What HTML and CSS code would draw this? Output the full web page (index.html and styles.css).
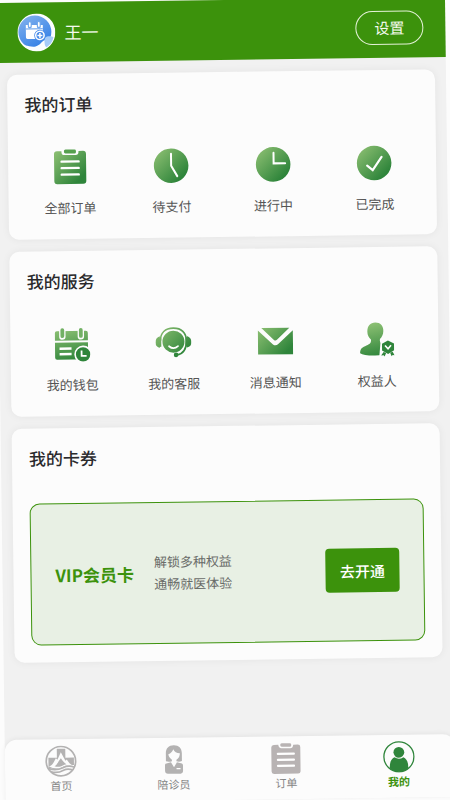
FILE: index.html
```html
<!DOCTYPE html>
<html lang="zh-CN">
<head>
<meta charset="utf-8">
<meta name="viewport" content="width=device-width, initial-scale=1">
<title>我的</title>
<link rel="stylesheet" href="styles.css">
</head>
<body>
<svg class="defs" width="0" height="0" aria-hidden="true">
  <defs>
    <linearGradient id="leaf" x1="0" y1="0" x2="36" y2="36" gradientUnits="userSpaceOnUse">
      <stop offset="0.1" stop-color="#89bd70"/>
      <stop offset="0.8" stop-color="#2f853b"/>
    </linearGradient>
    <linearGradient id="leafDown" x1="14" y1="0" x2="22" y2="36" gradientUnits="userSpaceOnUse">
      <stop offset="0" stop-color="#8fc275"/>
      <stop offset="0.95" stop-color="#2f853b"/>
    </linearGradient>
    <linearGradient id="sky" x1="0" y1="0" x2="0.6" y2="1">
      <stop offset="0" stop-color="#86b4ee"/>
      <stop offset="1" stop-color="#3480e6"/>
    </linearGradient>
  </defs>
</svg>
<div class="screen">
  <header class="header">
    <svg class="avatar" viewBox="0 0 38 38" role="img" aria-label="头像">
      <circle cx="19" cy="19" r="19" fill="#fbfdff"/>
      <circle cx="17.500" cy="18.500" r="16.500" fill="url(#sky)"/>
      <path d="M6 32c4-1 7 2 12 1s6-5 9-6 7-1 8-1c-2 6-8 11-16 11-6 0-10-2-13-5z" fill="#fbfdff"/>
      <path d="M27 27c0-3 2-4 4-4s4 0 5 1c-1 5-4 8-7 10-2-1-2-4-2-7z" fill="#a5cbf8"/>
      <path d="M8.500 11.500h17v14h-15.500q-1.500 0-1.500-1.500z" fill="#fff"/>
      <path d="M8.500 15.300h17" stroke="#5c9aeb" stroke-width="1"/>
      <path d="M12.500 9v4M21.500 9v4" stroke="#70a7ec" stroke-width="4" stroke-linecap="round"/>
      <path d="M12.500 9.500v3M21.500 9.500v3" stroke="#fff" stroke-width="1.700" stroke-linecap="round"/>
      <circle cx="22.500" cy="22" r="5.700" fill="#4489e8"/>
      <circle cx="22.500" cy="22" r="4.200" fill="none" stroke="#fff" stroke-width="1.500"/>
      <path d="M22.500 19.500v5M20 22h5" stroke="#fff" stroke-width="1.500"/>
    </svg>
    <span class="username">王一</span>
    <button class="settings" type="button">设置</button>
  </header>

  <main class="content">
    <section class="card">
      <h2 class="card-title">我的订单</h2>
      <nav class="grid">
        <a class="entry" href="#all">
          <svg class="entry-icon" viewBox="0 0 36 36">
            <path d="M5 2h4.500v1q0 3 3 3h11q3 0 3-3V2H31q3 0 3 3v27q0 3-3 3H5q-3 0-3-3V5q0-3 3-3z" fill="url(#leaf)"/>
            <rect x="12" y="0.500" width="12" height="4" rx="1.500" fill="#56a04e"/>
            <path d="M9.500 12.500h17M9.500 19h17M9.500 25.500h17" stroke="#fff" stroke-width="2.400" stroke-linecap="round"/>
          </svg>
          <span>全部订单</span>
        </a>
        <a class="entry" href="#unpaid">
          <svg class="entry-icon" viewBox="0 0 36 36">
            <circle cx="18" cy="18" r="17.300" fill="url(#leaf)"/>
            <path d="M18 6v12l6 10.500" fill="none" stroke="#fff" stroke-width="2" stroke-linecap="round" stroke-linejoin="round"/>
          </svg>
          <span>待支付</span>
        </a>
        <a class="entry" href="#ongoing">
          <svg class="entry-icon" viewBox="0 0 36 36">
            <circle cx="18" cy="18" r="17.300" fill="url(#leaf)"/>
            <path d="M18.500 6.500v10.500h11.500" fill="none" stroke="#fff" stroke-width="2" stroke-linecap="round"/>
          </svg>
          <span>进行中</span>
        </a>
        <a class="entry" href="#done">
          <svg class="entry-icon" viewBox="0 0 36 36">
            <circle cx="18" cy="18" r="17.300" fill="url(#leaf)"/>
            <path d="M11 20.500l5.500 4.500 9-13" fill="none" stroke="#fff" stroke-width="2.200" stroke-linecap="round"/>
          </svg>
          <span>已完成</span>
        </a>
      </nav>
    </section>

    <section class="card">
      <h2 class="card-title">我的服务</h2>
      <nav class="grid">
        <a class="entry" href="#wallet">
          <svg class="entry-icon" viewBox="0 0 36 36">
            <path d="M2.500 5h29q2 0 2 2v7.500h-33V7q0-2 2-2z" fill="url(#leafDown)"/>
            <path d="M0.500 16.500h33v17h-31q-2 0-2-2z" fill="url(#leafDown)"/>
            <path d="M8 4.500v6M26.500 4.500v6" stroke="#fcfcfc" stroke-width="6.400" stroke-linecap="round"/>
            <path d="M8 4v6M26.500 4v6" stroke="#72b164" stroke-width="3.800" stroke-linecap="round"/>
            <path d="M5 22.500h12M5 28h12" stroke="#fff" stroke-width="2.400"/>
            <circle cx="28.500" cy="28.500" r="8.800" fill="#fcfcfc"/>
            <circle cx="28.500" cy="28.500" r="7.200" fill="#2f853b"/>
            <path d="M27 24.500v5.500h5" fill="none" stroke="#fff" stroke-width="1.800"/>
          </svg>
          <span>我的钱包</span>
        </a>
        <a class="entry" href="#support">
          <svg class="entry-icon" viewBox="0 0 36 36">
            <path d="M4.500 11.500v11.500Q0 22 0 17.500t4.500-6zM31.500 11.500v11.500q4.500-1 4.500-5.500t-4.500-6z" fill="url(#leaf)"/>
            <path d="M5 16C5 8 10 3.500 18 3.500s13 4.500 13 13C31 25 27 29.500 21 30.500" fill="none" stroke="url(#leaf)" stroke-width="1.700"/>
            <path d="M4.800 13v9M31 13v9" stroke="url(#leaf)" stroke-width="2"/>
            <circle cx="18" cy="17" r="11" fill="url(#leaf)"/>
            <circle cx="20.500" cy="30.200" r="2.300" fill="#2f853b"/>
            <path d="M13.500 21.500q4.500 4 9 0" fill="none" stroke="#fff" stroke-width="1.700" stroke-linecap="round"/>
          </svg>
          <span>我的客服</span>
        </a>
        <a class="entry" href="#messages">
          <svg class="entry-icon" viewBox="0 0 36 36">
            <path d="M4 4.500h28L19.500 16.500q-1.500 1.500-3 0z" fill="url(#leaf)"/>
            <path d="M0.500 7L15.500 21q2.500 2 5 0L35.500 7v24h-35z" fill="url(#leaf)"/>
          </svg>
          <span>消息通知</span>
        </a>
        <a class="entry" href="#beneficiary">
          <svg class="entry-icon" viewBox="0 0 36 36">
            <path d="M17 0.500c5 0 8.200 3.500 8 8.500-.1 3.500-1.500 6-3.500 8-.5 3 .5 4.500 3 5.500L31 25v7q-6 1.500-14.500 1.500Q5 33.500 1.500 31c0-4 1.500-5.500 5-7 4-1.500 6.500-2.500 6-6.500C10.500 15.500 9 13 9 9.500c0-5.500 3-9 8-9z" fill="url(#leafDown)"/>
            <path d="M22 20.500l7.500-4.500L37 20.500V36H20.500z" fill="#fcfcfc"/>
            <path d="M29.500 18.500l6 3.300v6.700l-6 3.500-6-3.500v-6.700z" fill="#2f853b"/>
            <path d="M25 30l-2.500 3.500 2.500-.3 1 1.300 1.500-3.500M34 30l2 3.500-2-.3-1 1.300-1.500-3.500" fill="#2f853b"/>
            <path d="M26.500 23.500l3 3.500 3-3.500" fill="none" stroke="#fff" stroke-width="1.600"/>
          </svg>
          <span>权益人</span>
        </a>
      </nav>
    </section>

    <section class="card">
      <h2 class="card-title">我的卡券</h2>
      <div class="vip">
        <h3 class="vip-name">VIP会员卡</h3>
        <p class="vip-text">解锁多种权益<br>通畅就医体验</p>
        <button class="vip-button" type="button">去开通</button>
      </div>
    </section>
  </main>

  <nav class="tabbar">
    <a class="tab" href="#home">
      <svg class="tab-icon" viewBox="0 0 32 32">
        <circle cx="16" cy="16" r="14.700" fill="none" stroke="#b3b2b2" stroke-width="1.700"/>
        <path d="M12 3.500h8.500v9H29v7.500c-6-.5-9 1-13 3-4 1.500-8 1-12.500-.5V12.500H12z" fill="#b3b2b2"/>
        <path d="M4 21c4-1 5-5 7-8l1.500 1.500L16 7l4.500 8.500 1.500-1c1 2 3 4.500 5 5.500-5-.5-8 1-11 2.500-4 1.500-8 1-12-1.500z" fill="#fcfcfc"/>
        <path d="M9.500 21c3-1.500 3-4 6.500-8 2 3 3.500 5 5.500 6-3 .5-4.500 2-7 2.500q-2.500.3-5-.5z" fill="#b3b2b2"/>
        <path d="M3.500 23c6 2.500 10 1.500 14.500-.5 4-2 7-2 11-.5M6 26.500c5 1.500 9 .5 12.500-1.500 3-1.500 5.500-1.500 9-.2" fill="none" stroke="#b3b2b2" stroke-width="1.700"/>
      </svg>
      <span>首页</span>
    </a>
    <a class="tab" href="#escort">
      <svg class="tab-icon" viewBox="0 0 32 32">
        <path d="M8 17.500V9.500c0-5 3-8 8-8s8 3 8 8v8q-3 1-5.500 0v-1.500C21 14.500 22 12 22 9.500c-3 0-5.500-1.500-6.500-4-1 2.500-2.500 4-5 5 .3 2.500 1.500 4 3.500 5.500v1.500q-3 1-6 0z" fill="#b3b2b2"/>
        <path d="M13 18.500L7.500 20q-.5.500-.5 2v5q0 3 3 3h12.500q2.500 0 2.500-3v-5q0-1.500-1-2l-5-1.500-3 5z" fill="#b3b2b2"/>
        <path d="M18.500 25h4" stroke="#fff" stroke-width="1.300"/>
      </svg>
      <span>陪诊员</span>
    </a>
    <a class="tab" href="#orders">
      <svg class="tab-icon" viewBox="0 0 32 32">
        <path d="M4 2.500h4.500q.5 3.500 3 3.500h9q2.500 0 3-3.500H28q2.500 0 2.500 2.500v24q0 2.500-2.500 2.500H4q-2.500 0-2.500-2.500V5q0-2.500 2.500-2.500z" fill="#b8b3b3"/>
        <rect x="10.500" y="1" width="11" height="3.500" rx="1.500" fill="#b8b3b3"/>
        <path d="M8 11.500h16M8 17.500h16M8 23.500h16" stroke="#fff" stroke-width="2.200" stroke-linecap="round"/>
      </svg>
      <span>订单</span>
    </a>
    <a class="tab active" href="#mine" aria-current="page">
      <svg class="tab-icon" viewBox="0 0 32 32">
        <circle cx="16" cy="16" r="15" fill="none" stroke="#2f853b" stroke-width="1.300"/>
        <circle cx="16" cy="11.500" r="5.400" fill="#2f853b"/>
        <path d="M6.800 27.500C6.500 21 8.500 18 11.500 16.500q4.500 3 9 0c3 1.500 5 4.500 4.700 11C22.500 30 19.500 31 16 31s-6.500-1-9.200-3.500z" fill="#2f853b"/>
      </svg>
      <span>我的</span>
    </a>
  </nav>
</div>
</body>
</html>
```
FILE: styles.css
```css
* {
  box-sizing: border-box;
}

body {
  margin: 0;
  min-height: 100vh;
  overflow: hidden;
  background: #fcfcfc;
  color: #2a2a2c;
  font-family: "Noto Sans CJK SC", "Noto Sans", sans-serif;
}

a {
  color: inherit;
  text-decoration: none;
}

h2,
h3,
p {
  margin: 0;
}

button {
  padding: 0;
  font-family: inherit;
  cursor: pointer;
}

.defs {
  position: absolute;
}

/* The whole screen is tilted slightly, like a sheet of paper. */
.screen {
  display: flex;
  flex-direction: column;
  min-height: 100vh;
  background: #f1f1f1;
  transform: translate(-5px, 3px) rotate(-0.75deg);
  transform-origin: 0 0;
}

.header {
  display: flex;
  align-items: center;
  gap: 9px;
  height: 60px;
  padding: 0 22px;
  background: #3c920c;
  color: #f4faee;
}

.avatar {
  width: 38px;
  height: 38px;
}

.username {
  padding-bottom: 2px;
  font-size: 17px;
}

.settings {
  width: 68px;
  height: 34px;
  margin-left: auto;
  padding-bottom: 2px;
  border: 1px solid #e4f2d8;
  border-radius: 17px;
  background: transparent;
  color: #f4faee;
  font-size: 15px;
}

.content {
  display: flex;
  flex-direction: column;
  gap: 12px;
  padding: 12px 11px;
}

.card {
  padding: 18px 17px 17px;
  border-radius: 10px;
  background: #fcfcfc;
  box-shadow: 0 0 8px rgba(0, 0, 0, 0.06);
}

.card-title {
  font-size: 17px;
  font-weight: 500;
  line-height: 24px;
}

.grid {
  display: grid;
  grid-template-columns: repeat(4, 1fr);
  margin: 33px -6px 4px;
}

.entry {
  display: flex;
  flex-direction: column;
  align-items: center;
  gap: 13px;
  color: #555;
  font-size: 13px;
  line-height: 20px;
}

.entry-icon {
  width: 36px;
  height: 36px;
}

.vip {
  display: flex;
  align-items: center;
  height: 142px;
  margin-top: 33px;
  padding: 0 24px;
  border: 1px solid #3c920c;
  border-radius: 10px;
  background: #e8f0e4;
}

.vip-name {
  color: #3c920c;
  font-size: 17px;
  font-weight: 700;
}

.vip-text {
  margin-left: 20px;
  color: #6a6c69;
  font-size: 13px;
  line-height: 22px;
}

.vip-button {
  width: 74px;
  height: 44px;
  margin-left: auto;
  border: 0;
  border-radius: 4px;
  background: #3c920c;
  color: #fff;
  font-size: 15px;
  font-weight: 500;
}

.tabbar {
  display: grid;
  grid-template-columns: repeat(4, 1fr);
  margin-top: auto;
  padding: 6px 0 9px;
  border-radius: 12px 12px 0 0;
  background: #fcfcfc;
  box-shadow: 0 -1px 5px rgba(0, 0, 0, 0.06);
}

.tab {
  display: flex;
  flex-direction: column;
  align-items: center;
  color: #858585;
  font-size: 11px;
  line-height: 16px;
}

.tab-icon {
  width: 32px;
  height: 32px;
}

.active {
  color: #3c920c;
  font-weight: 700;
}
```
